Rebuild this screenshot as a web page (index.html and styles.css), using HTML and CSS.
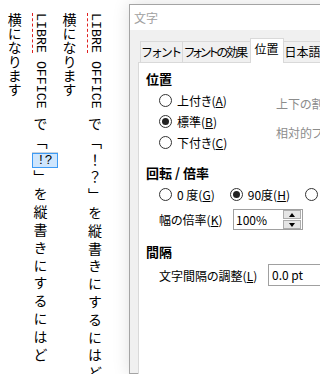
FILE: index.html
```html
<!DOCTYPE html>
<html lang="ja">
<head>
  <meta charset="UTF-8" />
  <meta name="viewport" content="width=device-width, initial-scale=1.0" />
  <title>文字</title>
  <link rel="stylesheet" href="styles.css">
</head>
<body>
  <div class="screen">
    <!-- document with vertical text -->
    <div class="doc">
      <div class="vtext">
        <div class="col just"><span class="lat"><span class="typo">LIBRE</span> OFFICE </span>で「！？」を縦書きにするにはど</div>
        <div class="col">横になります</div>
        <div class="col just"><span class="lat"><span class="typo">LIBRE</span> OFFICE </span>で「<span class="sel">!?</span>」を縦書きにするにはど</div>
        <div class="col">横になります</div>
      </div>
    </div>

    <!-- character dialog -->
    <div class="dialog">
      <div class="titlebar">文字</div>
      <div class="dlg-body">
        <div class="tabs">
          <div class="tab">フォント</div>
          <div class="tab tight">フォントの効果</div>
          <div class="tab active">位置</div>
          <div class="tab">日本語の体裁</div>
        </div>

        <div class="page">
          <div class="group-title">位置</div>
          <div class="pos">
            <div class="radios">
              <div class="opt"><span class="radio"></span>上付き(<u>A</u>)</div>
              <div class="opt"><span class="radio on"></span>標準(<u>B</u>)</div>
              <div class="opt"><span class="radio"></span>下付き(<u>C</u>)</div>
            </div>
            <div class="pos-side">
              <div class="side-row">上下の割合(R)</div>
              <div class="side-row">相対的フォントサイズ(E)</div>
            </div>
          </div>

          <div class="group-title rot">回転 / 倍率</div>
          <div class="opt-line">
            <div class="opt"><span class="radio"></span>0 度(<u>G</u>)</div>
            <div class="opt"><span class="radio on"></span>90度(<u>H</u>)</div>
            <div class="opt"><span class="radio"></span>270度(<u>I</u>)</div>
          </div>
          <div class="field scale">
            <span class="field-label">幅の倍率(<u>K</u>)</span>
            <div class="spin">
              <span class="spin-val">100%</span>
              <div class="spin-btns">
                <span class="spin-btn"><i class="up"></i></span>
                <span class="spin-btn"><i class="down"></i></span>
              </div>
            </div>
          </div>

          <div class="group-title gap">間隔</div>
          <div class="field spacing">
            <span class="field-label wide">文字間隔の調整(<u>L</u>)</span>
            <div class="input">0.0 pt</div>
          </div>
        </div>
      </div>
    </div>
  </div>
</body>
</html>
```

FILE: styles.css
```css
* {
  margin: 0;
  padding: 0;
  box-sizing: border-box;
}

body {
  background: #fff;
  color: #000;
}

.screen {
  display: flex;
  width: 320px;
  height: 374px;
  overflow: hidden;
}

/* document */

.doc {
  flex: none;
  width: 129px;
  padding-left: 1px;
  background: #fff;
  overflow: hidden;
}

.vtext {
  writing-mode: vertical-rl;
  height: 374px;
  padding-top: 13px;
  font-family: 'Noto Sans CJK JP', sans-serif;
  font-size: 14px;
  line-height: 25.7px;
}

.col {
  white-space: nowrap;
}

.col.just {
  letter-spacing: 3.8px;
}

.lat {
  font-family: 'Liberation Mono', monospace;
  font-size: 13.3px;
  letter-spacing: 0;
}

.typo {
  border-left: 1px dashed #e02020;
}

.sel {
  display: inline-block;
  writing-mode: horizontal-tb;
  width: 26px;
  height: 15px;
  margin: 1px -2px 1px -1px;
  border: 1px solid #3d9bf5;
  background: #cfe6fd;
  box-shadow: 0 -1px 0 #c9d3dc;
  font-family: 'Liberation Mono', monospace;
  font-size: 13px;
  line-height: 13px;
  letter-spacing: 0;
  text-align: center;
  vertical-align: middle;
}

/* dialog */

.dialog {
  flex: none;
  width: 360px;
  margin-top: 4px;
  border: 1px solid #a4a4a4;
  background: #f0f0f0;
  box-shadow: 0 0 16px rgba(0, 0, 0, 0.13);
  font-family: 'Noto Sans CJK JP', sans-serif;
  font-feature-settings: "palt";
  font-size: 12px;
}

.titlebar {
  height: 25px;
  padding-left: 4px;
  background: #fff;
  color: #a0a0a0;
  line-height: 25px;
}

.dlg-body {
  padding: 8px 0 0 8px;
}

.tabs {
  display: flex;
  align-items: flex-end;
  height: 24px;
  padding-left: 2px;
}

.tab {
  height: 21px;
  padding: 0 1px;
  margin-right: -1px;
  border: 1px solid #d9d9d9;
  border-bottom: none;
  background: #f0f0f0;
  line-height: 20px;
  white-space: nowrap;
}

.tab.tight {
  letter-spacing: -1.8px;
  padding-right: 3px;
}

.tab.active {
  position: relative;
  z-index: 1;
  height: 25px;
  margin-bottom: -1px;
  padding: 0 4px;
  background: #fff;
}

.page {
  min-height: 320px;
  padding: 7px 0 0 7px;
  background: #fff;
  border-top: 1px solid #d9d9d9;
  border-left: 1px solid #d9d9d9;
}

.group-title {
  font-size: 13px;
  font-weight: bold;
  line-height: 18px;
}

.group-title.rot {
  margin-top: 11px;
}

.group-title.gap {
  margin-top: 13px;
}

.pos {
  display: flex;
  margin-top: 2px;
}

.radios {
  flex: none;
  width: 130px;
  padding-left: 13px;
}

.opt {
  display: flex;
  align-items: center;
  height: 21px;
  white-space: nowrap;
}

.radio {
  display: flex;
  align-items: center;
  justify-content: center;
  width: 13px;
  height: 13px;
  margin-right: 5px;
  border: 1px solid #333;
  border-radius: 50%;
  background: #fff;
}

.radio.on::after {
  content: "";
  width: 7px;
  height: 7px;
  border-radius: 50%;
  background: #222;
}

.pos-side {
  margin-top: -1.5px;
  color: #8c8c8c;
}

.side-row {
  height: 29px;
  line-height: 29px;
  white-space: nowrap;
}

.opt-line {
  display: flex;
  gap: 15px;
  margin-top: 1.5px;
  padding-left: 13px;
}

.field {
  display: flex;
  align-items: center;
  padding-left: 13px;
}

.field.scale {
  margin-top: 4.5px;
}

.field.spacing {
  margin-top: 3px;
}

.field-label {
  flex: none;
  width: 74px;
  white-space: nowrap;
}

.field-label.wide {
  width: 109px;
}

.spin {
  display: flex;
  align-items: center;
  width: 70px;
  height: 21px;
  border: 1px solid #a0a0a0;
  background: #fff;
}

.spin-val {
  flex: 1;
  padding-left: 2px;
}

.spin-btns {
  display: flex;
  flex-direction: column;
  gap: 1px;
  width: 18px;
  margin-right: 1px;
}

.spin-btn {
  display: flex;
  align-items: center;
  justify-content: center;
  height: 9px;
  border: 1px solid #acacac;
  background: #e5e5e5;
}

.spin-btn i {
  width: 0;
  height: 0;
  border-left: 3.5px solid transparent;
  border-right: 3.5px solid transparent;
}

.spin-btn .up {
  border-bottom: 4px solid #000;
}

.spin-btn .down {
  border-top: 4px solid #000;
}

.input {
  width: 110px;
  height: 22px;
  padding-left: 3px;
  border: 1px solid #a0a0a0;
  background: #fff;
  line-height: 20px;
}
```
